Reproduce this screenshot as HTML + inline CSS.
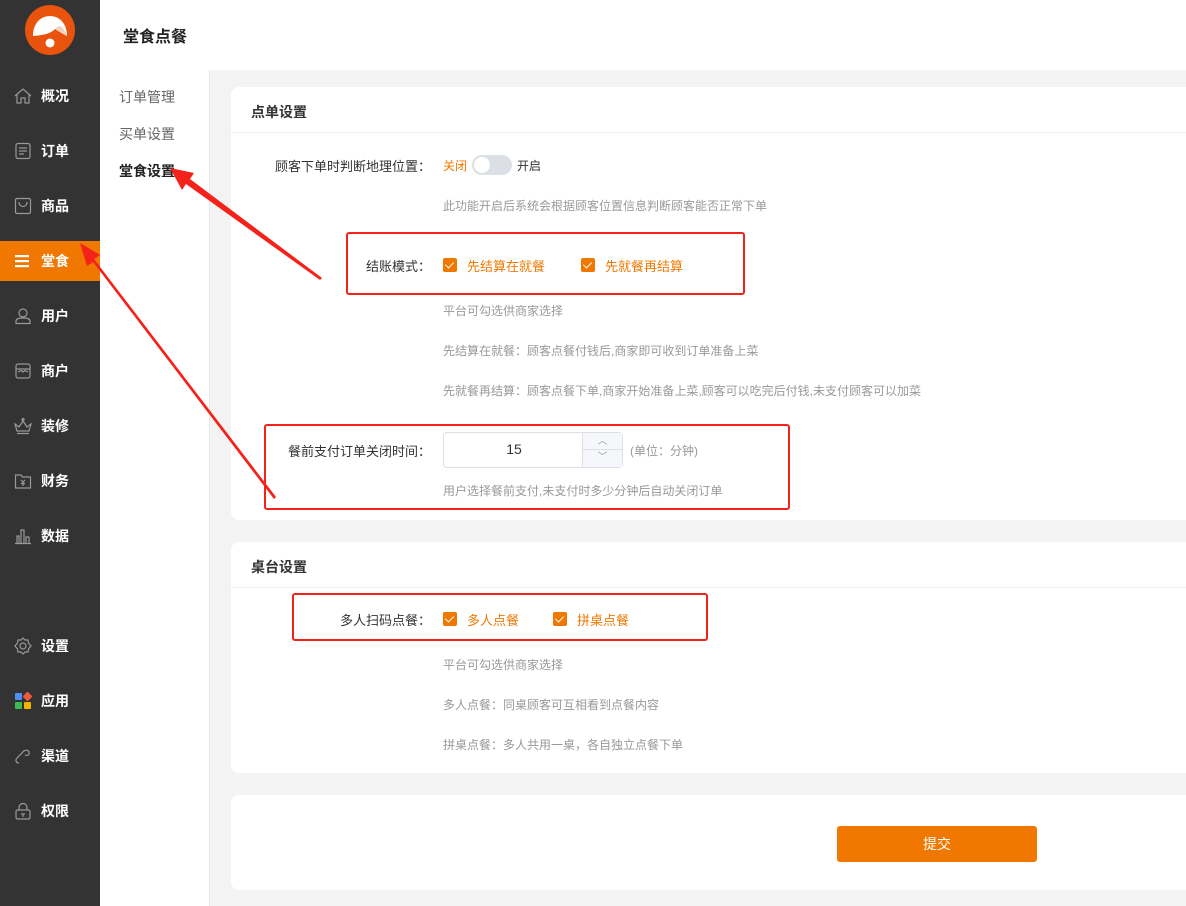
<!DOCTYPE html>
<html><head><meta charset="utf-8"><style>
*{margin:0;padding:0;box-sizing:border-box}
body{width:1186px;height:906px;overflow:hidden;background:#f3f3f3;font-family:"Liberation Sans","Noto Sans CJK SC",sans-serif;position:relative;color:#333}
.abs{position:absolute}
#side{left:0;top:0;width:100px;height:906px;background:#333}
.nav{position:absolute;left:0;width:100px;height:40px;color:#fff;font-size:14px;font-weight:bold;line-height:40px}
.nav span{position:absolute;left:41px}
.nav svg{position:absolute;left:14px;top:11px}
.nav.on{background:#f07800}
#hdr{left:100px;top:0;width:1086px;height:70px;background:#fff}
#sub{left:100px;top:70px;width:110px;height:836px;background:#fff;border-right:1px solid #e8e8e8}
.sm{position:absolute;left:19px;font-size:14px;color:#666}
.card{position:absolute;left:231px;width:980px;background:#fff;border-radius:8px}
.ch{position:absolute;left:0;top:0;width:100%;height:46px;border-bottom:1px solid #eee;font-size:14px;font-weight:bold;padding:15px 0 0 20px}
.lbl{position:absolute;right:755px;font-size:13px;color:#333;text-align:right;white-space:nowrap}
.hint{position:absolute;left:443px;font-size:12px;color:#999;white-space:nowrap}
.cb{position:absolute;width:14px;height:14px;background:#f07800;border-radius:2px}
.cb:after{content:"";position:absolute;left:4px;top:2px;width:4px;height:7px;border:solid #fff;border-width:0 1.5px 1.5px 0;transform:rotate(45deg)}
.ot{position:absolute;font-size:13px;color:#f07800;white-space:nowrap}
.red{position:absolute;border:2.5px solid #f5211b;border-radius:3px}
</style></head><body>
<div id="side" class="abs">
<svg class="abs" style="left:25px;top:5px" width="50" height="50" viewBox="0 0 50 50"><circle cx="25" cy="25" r="25" fill="#e8530e"/><path d="M8 31 C8 18 16 11 25 11 C34 11 42 18 42 31 C38 29 35 27 30 24 C27 27 23 30 8 31Z" fill="#fff"/><path d="M30 24 C34 19 38 20 42 31 C38 29 35 27 30 24Z" fill="#f5d0c0"/><circle cx="25" cy="38" r="4.5" fill="#fff"/></svg>
<div class="nav" style="top:76px"><svg width="18" height="18" viewBox="0 0 18 18" fill="none" stroke="#999" stroke-width="1.2"><path d="M1 9L9 2L17 9M3 7.5V16H7V11H11V16H15V7.5"/></svg><span>概况</span></div>
<div class="nav" style="top:131px"><svg width="18" height="18" viewBox="0 0 18 18" fill="none" stroke="#999" stroke-width="1.2"><rect x="2" y="1.5" width="14" height="15" rx="2"/><path d="M5 6H13M5 9H13M5 12H10"/></svg><span>订单</span></div>
<div class="nav" style="top:186px"><svg width="18" height="18" viewBox="0 0 18 18" fill="none" stroke="#999" stroke-width="1.2"><rect x="1.5" y="1.5" width="15" height="15" rx="1.5"/><path d="M5 5C5 11 13 11 13 5"/></svg><span>商品</span></div>
<div class="nav on" style="top:241px"><svg width="18" height="18" viewBox="0 0 18 18" fill="#fff"><rect x="1" y="3" width="14" height="2.2"/><rect x="1" y="8" width="14" height="2.2"/><rect x="1" y="13" width="14" height="2.2"/></svg><span>堂食</span></div>
<div class="nav" style="top:296px"><svg width="18" height="18" viewBox="0 0 18 18" fill="none" stroke="#999" stroke-width="1.2"><circle cx="9" cy="6" r="4"/><path d="M2 16.5V14C2 12 5 11 9 11S16 12 16 14V16.5Z"/></svg><span>用户</span></div>
<div class="nav" style="top:351px"><svg width="18" height="18" viewBox="0 0 18 18" fill="none" stroke="#999" stroke-width="1.2"><rect x="2" y="2" width="14" height="14" rx="2"/><path d="M2 7H16M4 10L7 8.5L9 10L11 8.5L14 10"/></svg><span>商户</span></div>
<div class="nav" style="top:406px"><svg width="18" height="18" viewBox="0 0 18 18" fill="none" stroke="#999" stroke-width="1.2"><path d="M1 7L5 10L9 4L13 10L17 7L15 14H3Z M3 16.5H15"/><circle cx="9" cy="2.5" r="1"/></svg><span>装修</span></div>
<div class="nav" style="top:461px"><svg width="18" height="18" viewBox="0 0 18 18" fill="none" stroke="#999" stroke-width="1.2"><path d="M1.5 3H7L8.5 5H16.5V16H1.5Z"/><path d="M7 8L9 10L11 8M9 10V14M7 11.5H11"/></svg><span>财务</span></div>
<div class="nav" style="top:516px"><svg width="18" height="18" viewBox="0 0 18 18" fill="none" stroke="#999" stroke-width="1.2"><path d="M1 16.5H17M3 16V9H5V16M7 16V3H10V16M12 16V10H15V16"/></svg><span>数据</span></div>
<div class="nav" style="top:626px"><svg width="18" height="18" viewBox="0 0 18 18" fill="none" stroke="#999" stroke-width="1.2"><path d="M9 1L11 3L14 3L14.5 6L17 9L14.5 12L14 15L11 15L9 17L7 15L4 15L3.5 12L1 9L3.5 6L4 3L7 3Z"/><circle cx="9" cy="9" r="3"/></svg><span>设置</span></div>
<div class="nav" style="top:681px"><svg width="18" height="18" viewBox="0 0 18 18"><rect x="1" y="1" width="7" height="7" rx="1" fill="#4e8ef7"/><rect x="10" y="1" width="7" height="7" rx="1" fill="#ee5a3c" transform="rotate(45 13.5 4.5)"/><rect x="1" y="10" width="7" height="7" rx="1" fill="#3cba54"/><rect x="10" y="10" width="7" height="7" rx="1" fill="#f4b400"/></svg><span>应用</span></div>
<div class="nav" style="top:736px"><svg width="18" height="18" viewBox="0 0 18 18" fill="none" stroke="#999" stroke-width="1.2"><path d="M5 16C2 16 1 13 3 11L8 6C10 3 14 2 15 5C16 8 13 9 11 8"/></svg><span>渠道</span></div>
<div class="nav" style="top:791px"><svg width="18" height="18" viewBox="0 0 18 18" fill="none" stroke="#999" stroke-width="1.2"><rect x="2" y="8" width="14" height="9" rx="1.5"/><path d="M5 8V5.5C5 3 7 1.5 9 1.5S13 3 13 5.5V8M7 12H11M9 12V15"/></svg><span>权限</span></div>
</div>
<div id="hdr" class="abs"><div class="abs" style="left:23px;top:23px;font-size:16px;font-weight:bold;color:#222">堂食点餐</div></div>
<div id="sub" class="abs">
<div class="sm" style="top:17px">订单管理</div>
<div class="sm" style="top:54px">买单设置</div>
<div class="sm" style="top:91px;color:#222;font-weight:bold">堂食设置</div>
</div>

<div class="card" style="top:87px;height:433px">
<div class="ch">点单设置</div>
</div>
<div class="card" style="top:542px;height:231px"><div class="ch">桌台设置</div></div>
<div class="card" style="top:795px;height:95px">
<div class="abs" style="left:606px;top:31px;width:200px;height:36px;background:#f07800;border-radius:3px;color:#fff;font-size:14px;text-align:center;line-height:36px">提交</div>
</div>

<div class="lbl" style="top:156px">顾客下单时判断地理位置：</div>
<div class="ot" style="left:443px;top:157px;font-size:12px">关闭</div>
<div class="abs" style="left:472px;top:155px;width:40px;height:20px;background:#dcdfe6;border-radius:10px"><div class="abs" style="left:2px;top:2px;width:16px;height:16px;background:#fff;border-radius:50%"></div></div>
<div class="abs" style="left:517px;top:157px;font-size:12px;color:#333">开启</div>
<div class="hint" style="top:197px">此功能开启后系统会根据顾客位置信息判断顾客能否正常下单</div>

<div class="lbl" style="top:256px">结账模式：</div>
<div class="cb" style="left:443px;top:258px"></div><div class="ot" style="left:467px;top:256px">先结算在就餐</div>
<div class="cb" style="left:581px;top:258px"></div><div class="ot" style="left:605px;top:256px">先就餐再结算</div>
<div class="hint" style="top:302px">平台可勾选供商家选择</div>
<div class="hint" style="top:342px">先结算在就餐：顾客点餐付钱后,商家即可收到订单准备上菜</div>
<div class="hint" style="top:382px">先就餐再结算：顾客点餐下单,商家开始准备上菜,顾客可以吃完后付钱,未支付顾客可以加菜</div>

<div class="lbl" style="top:441px">餐前支付订单关闭时间：</div>
<div class="abs" style="left:443px;top:432px;width:180px;height:36px;border:1px solid #dcdfe6;border-radius:4px;background:#fff">
<div class="abs" style="left:0;top:8px;width:140px;text-align:center;font-size:14px">15</div>
<div class="abs" style="left:138px;top:0;width:40px;height:34px;background:#f5f7fa;border-left:1px solid #dcdfe6"><div style="height:17px;border-bottom:1px solid #dcdfe6;color:#999;font-size:10px;text-align:center;line-height:17px">︿</div><div style="color:#999;font-size:10px;text-align:center;line-height:16px">﹀</div></div>
</div>
<div class="abs" style="left:630px;top:442px;font-size:12px;color:#999">(单位：分钟)</div>
<div class="hint" style="top:482px">用户选择餐前支付,未支付时多少分钟后自动关闭订单</div>

<div class="lbl" style="top:610px">多人扫码点餐：</div>
<div class="cb" style="left:443px;top:612px"></div><div class="ot" style="left:467px;top:610px">多人点餐</div>
<div class="cb" style="left:553px;top:612px"></div><div class="ot" style="left:577px;top:610px">拼桌点餐</div>
<div class="hint" style="top:656px">平台可勾选供商家选择</div>
<div class="hint" style="top:696px">多人点餐：同桌顾客可互相看到点餐内容</div>
<div class="hint" style="top:736px">拼桌点餐：多人共用一桌，各自独立点餐下单</div>

<div class="red" style="left:346px;top:232px;width:399px;height:63px"></div>
<div class="red" style="left:264px;top:424px;width:526px;height:86px"></div>
<div class="red" style="left:292px;top:593px;width:416px;height:48px"></div>

<svg class="abs" style="left:0;top:0" width="1186" height="906" viewBox="0 0 1186 906">
<polygon points="322,278 320,280 186,184 182,190 170,168 194,173 190,179" fill="#f5211b"/>
<polygon points="276,497 274,499 93,262 87,266 80,243 100,255 94,259" fill="#f5211b"/>
</svg>
</body></html>
